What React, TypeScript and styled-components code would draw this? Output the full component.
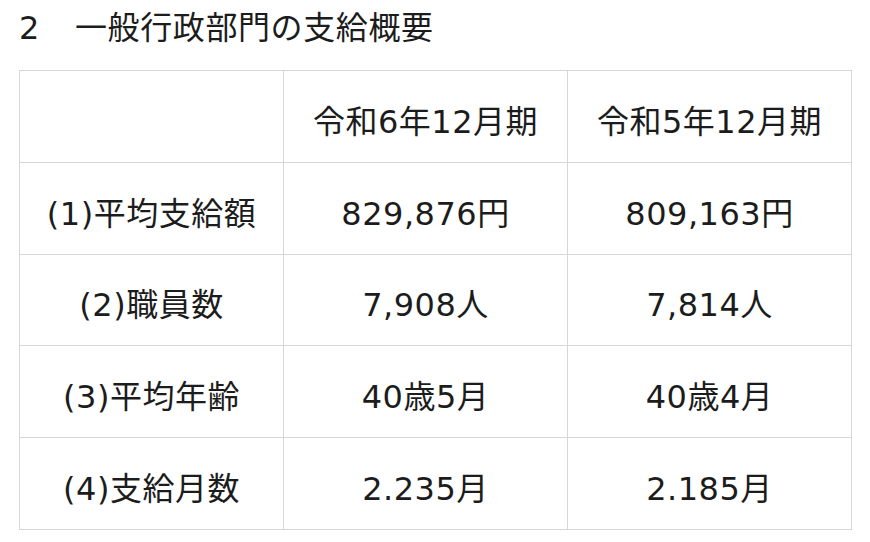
import styled, { createGlobalStyle } from 'styled-components';

const GlobalStyle = createGlobalStyle`
  html, body {
    margin: 0;
    padding: 0;
    background: #ffffff;
  }
  body {
    font-family: "DejaVu Sans", "Noto Sans CJK JP", sans-serif;
    color: #1c1c1c;
  }
`;

// データ
const periods = ['令和6年12月期', '令和5年12月期'];

const rows = [
  { label: '(1)平均支給額', values: ['829,876円', '809,163円'] },
  { label: '(2)職員数', values: ['7,908人', '7,814人'] },
  { label: '(3)平均年齢', values: ['40歳5月', '40歳4月'] },
  { label: '(4)支給月数', values: ['2.235月', '2.185月'] },
];

export default function App() {
  return (
    <>
      <GlobalStyle />
      <Page>
        <Title>
          <TitleNumber>2</TitleNumber>
          一般行政部門の支給概要
        </Title>
        <Table>
          <colgroup>
            <col style={{ width: 264 }} />
            <col style={{ width: 284 }} />
            <col style={{ width: 284 }} />
          </colgroup>
          <thead>
            <tr>
              <Cell as="th" />
              {periods.map((p) => (
                <Cell as="th" key={p}>{p}</Cell>
              ))}
            </tr>
          </thead>
          <tbody>
            {rows.map((row) => (
              <tr key={row.label}>
                <Cell>{row.label}</Cell>
                {row.values.map((v, i) => (
                  <Cell key={i}>{v}</Cell>
                ))}
              </tr>
            ))}
          </tbody>
        </Table>
      </Page>
    </>
  );
}

const Page = styled.div`
  width: 870px;
  height: 542px;
  padding: 8px 0 0 19px;
  box-sizing: border-box;
`;

const Title = styled.h2`
  margin: 0;
  font-size: 32px;
  font-weight: 400;
  line-height: 40px;
  display: flex;
  align-items: center;
  letter-spacing: 0.6px;
`;

const TitleNumber = styled.span`
  width: 56px;
`;

const Table = styled.table`
  margin-top: 22px;
  width: 833px;
  border-collapse: collapse;
  table-layout: fixed;
`;

const Cell = styled.td`
  border: 1.5px solid #d6d6d6;
  height: 91.8px;
  padding: 5px 0 0;
  box-sizing: border-box;
  text-align: center;
  vertical-align: middle;
  font-size: 32px;
  font-weight: 400;
  letter-spacing: 0.5px;
`;
